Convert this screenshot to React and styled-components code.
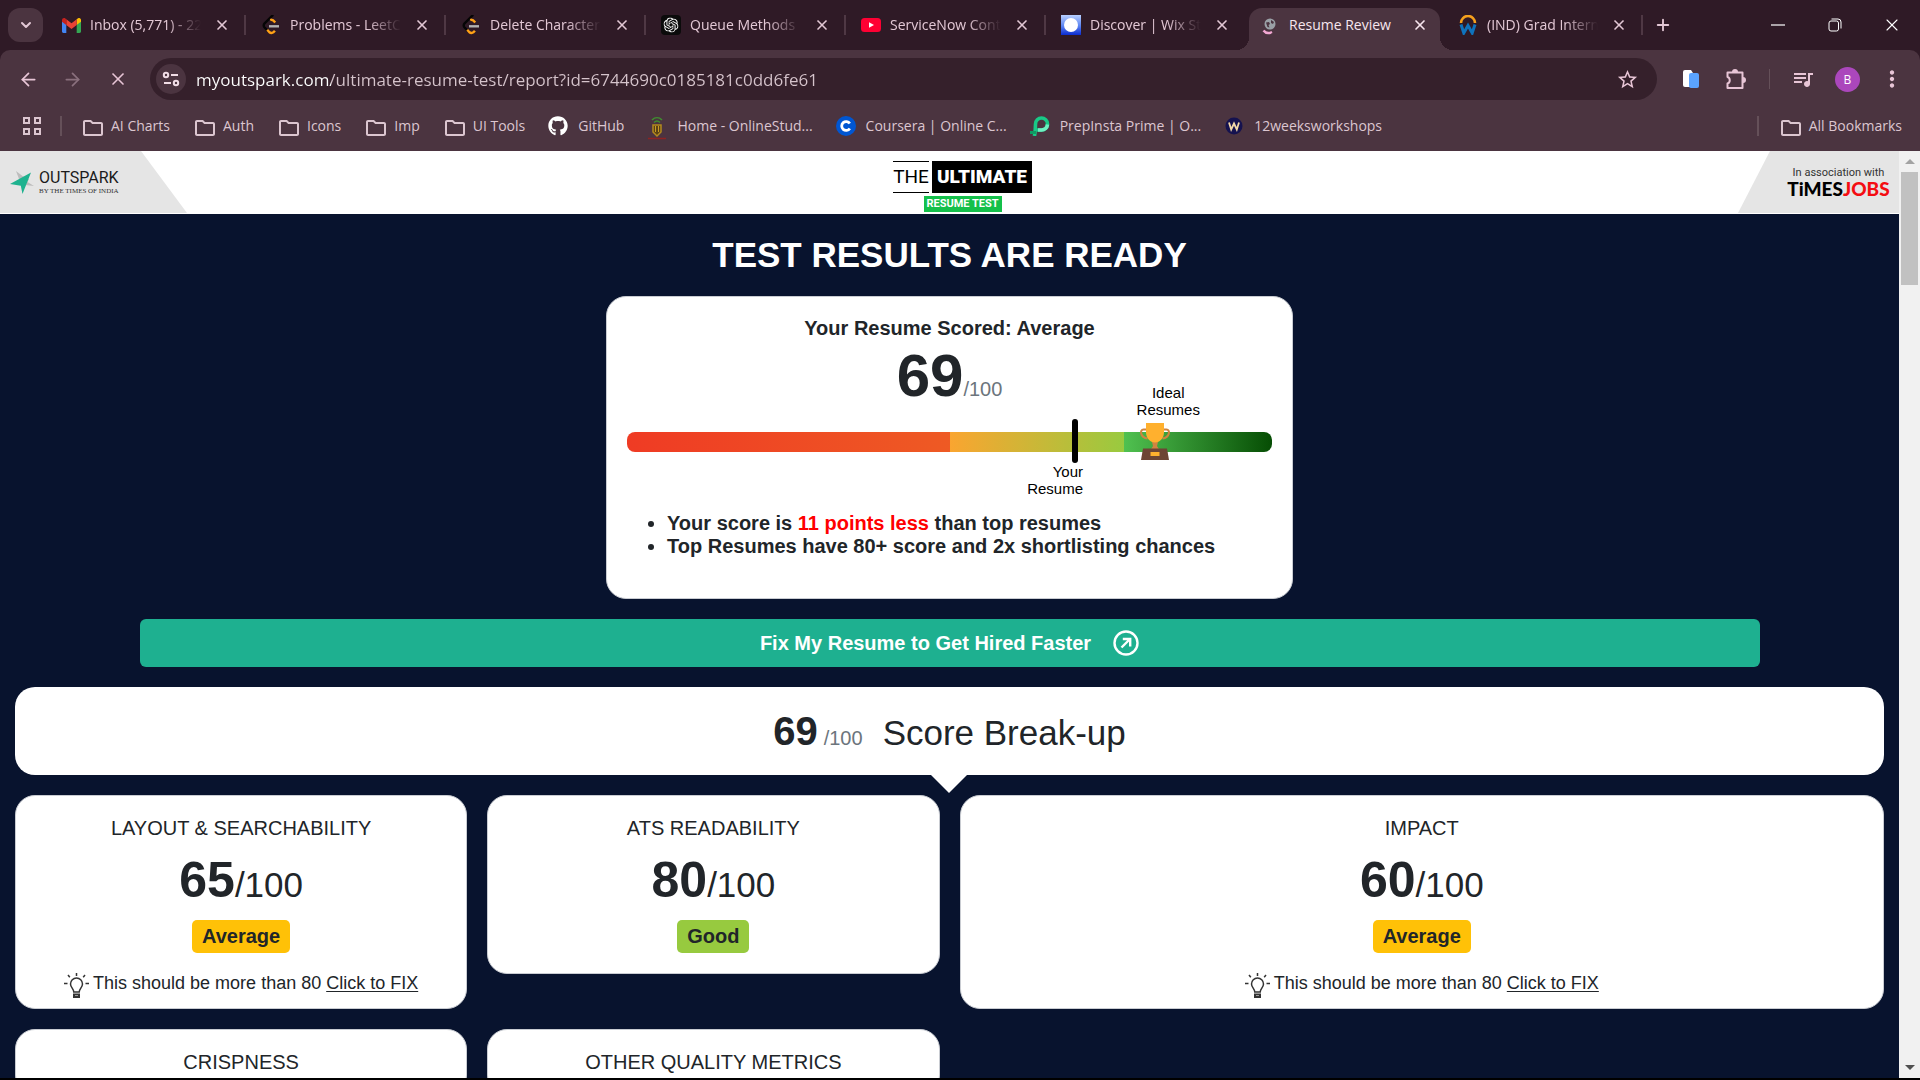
import React from "react";
import styled, { createGlobalStyle, css } from "styled-components";
import {
  MdStarBorder,
  MdOutlineFolder,
  MdQueueMusic,
  MdMoreVert,
} from "react-icons/md";
import { FaGithub } from "react-icons/fa";
import { SiOpenai } from "react-icons/si";
import { ArrowLeft, ArrowRight, X, Plus, ChevronDown } from "lucide-react";

const UI_FONT = `"Open Sans", "Noto Sans", sans-serif`;
const PAGE_FONT = `"Liberation Sans", Arial, sans-serif`;

const color = {
  strip: "#2f1a26",
  toolbar: "#4b3440",
  field: "#35202b",
  chromeText: "#e3c8d5",
  pink: "#e8c5d6",
  navy: "#08132e",
  ink: "#212529",
  muted: "#6c757d",
  teal: "#1eb090",
};

const GlobalStyle = createGlobalStyle`
  *, *::before, *::after { box-sizing: border-box; }
  body { margin: 0; background: #000; }
  button, input { font: inherit; }
  button { border: 0; padding: 0; background: none; color: inherit; }
`;

/* ---------- Browser frame ---------- */

const Window = styled.div`
  display: flex;
  flex-direction: column;
  height: 100vh;
  padding-bottom: 2px;
  overflow: hidden;
  font-family: ${UI_FONT};
  background: #000;
`;

const Chrome = styled.div`
  flex: none;
  background: ${color.strip};
`;

const TabStrip = styled.div`
  display: flex;
  align-items: center;
  height: 50px;
  padding-left: 8px;
  color: ${color.chromeText};
`;

const TabSearch = styled.button`
  display: grid;
  place-items: center;
  width: 35px;
  height: 34px;
  margin-right: 3px;
  border-radius: 12px;
  background: ${color.toolbar};
`;

const Tab = styled.div`
  position: relative;
  display: flex;
  align-items: center;
  flex: 0 1 200px;
  min-width: 0;
  height: 42px;
  margin-top: 8px;
  padding: 0 14px 8px 15px;
  font-size: 14px;
  line-height: 20px;

  ${(p) =>
    p.$divided &&
    css`
      background: linear-gradient(#4f3844, #4f3844) right 7px / 2px 20px no-repeat;
    `}

  ${(p) =>
    p.$active &&
    css`
      color: #f7e6ee;
      background: ${color.toolbar};
      border-radius: 13px 13px 0 0;
      flex-basis: 191px;
      margin-left: 3px;
      margin-right: 3px;
      padding: 0 10px 8px 11px;

      &::before,
      &::after {
        content: "";
        position: absolute;
        bottom: 0;
        width: 13px;
        height: 13px;
      }
      &::before {
        left: -13px;
        background: radial-gradient(circle at 0 0, transparent 13px, ${color.toolbar} 13px);
      }
      &::after {
        right: -13px;
        background: radial-gradient(circle at 100% 0, transparent 13px, ${color.toolbar} 13px);
      }
    `}
`;

const Favicon = styled.span`
  display: grid;
  place-items: center;
  flex: none;
  width: 20px;
  height: 20px;
`;

const TabTitle = styled.span`
  flex: 1;
  min-width: 0;
  margin: 0 11px 0 9px;
  overflow: hidden;
  white-space: nowrap;
  mask-image: ${(p) =>
    p.$fade ? "linear-gradient(90deg, #000 calc(100% - 34px), transparent)" : "none"};
`;

const IconButton = styled.button`
  display: grid;
  place-items: center;
  flex: none;
  width: ${(p) => p.$w || 20}px;
  height: ${(p) => p.$h || 20}px;
  color: ${(p) => p.$color || "inherit"};
`;

const WindowControls = styled.div`
  display: flex;
  margin-left: auto;
  color: #fff;
`;

const Toolbar = styled.div`
  display: flex;
  align-items: center;
  height: 58px;
  padding: 0 6px;
  border-radius: 10px 10px 0 0;
  background: ${color.toolbar};
  color: ${color.pink};
`;

const AddressBar = styled.form`
  display: flex;
  align-items: center;
  flex: 1;
  height: 42px;
  margin: 0 11px 0 10px;
  padding: 0 14px 0 6px;
  border-radius: 21px;
  background: ${color.field};
`;

const SiteInfo = styled.button`
  display: grid;
  place-items: center;
  width: 30px;
  height: 30px;
  border-radius: 50%;
  background: ${color.toolbar};
`;

const UrlInput = styled.input`
  flex: 1;
  min-width: 0;
  height: 30px;
  margin-left: 10px;
  padding: 0;
  border: 0;
  outline: 0;
  font-size: 17px;
  color: #d6c4cc;
  background: linear-gradient(90deg, #fff 135px, #d6c4cc 135px);
  background-clip: text;
  -webkit-text-fill-color: transparent;
`;

const VerticalRule = styled.span`
  width: ${(p) => p.$w || 2}px;
  height: 20px;
  flex: none;
  background: #655059;
`;

const Avatar = styled.span`
  display: grid;
  place-items: center;
  width: 25px;
  height: 25px;
  border-radius: 50%;
  background: #ab47bc;
  color: #fff;
  font-size: 12px;
`;

const BookmarksBar = styled.nav`
  display: flex;
  align-items: center;
  height: 43px;
  padding: 0 18px 8px 22px;
  background: ${color.toolbar};
  color: ${color.chromeText};
`;

const BookmarkList = styled.div`
  display: flex;
  flex: 1;
  min-width: 0;
  gap: 23px;
  margin-left: 19px;
`;

const Bookmark = styled.a`
  display: flex;
  align-items: center;
  gap: 10px;
  font-size: 14px;
  line-height: 20px;
  color: #dcc6d0;
  text-decoration: none;
  white-space: nowrap;
`;

const AppsButton = styled(IconButton)`
  margin-right: 18px;
`;

const Trailing = styled.div`
  display: flex;
  align-items: center;
  gap: 20px;
`;

/* ---------- Web page ---------- */

const Viewport = styled.div`
  display: flex;
  flex: 1;
  min-height: 0;
  overflow: hidden;
`;

const Page = styled.main`
  flex: 1;
  min-width: 0;
  overflow: hidden;
  background: ${color.navy};
  color: ${color.ink};
  font-family: ${PAGE_FONT};
  font-size: 20px;
  line-height: 24px;
`;

const Scrollbar = styled.div`
  display: flex;
  flex-direction: column;
  align-items: center;
  width: 21px;
  flex: none;
  background: #f1f1f1;
`;

const ScrollArrow = styled.span`
  display: grid;
  place-items: center;
  height: 21px;
`;

const ScrollThumb = styled.span`
  width: 17px;
  height: 113px;
  margin-bottom: auto;
  background: #c1c1c1;
`;

const SiteHeader = styled.header`
  display: flex;
  justify-content: space-between;
  height: 63px;
  background: #fff;
`;

const BrandPanel = styled.div`
  display: flex;
  align-items: center;
  height: 62px;
  background: #e5e5e5;
`;

const OutsparkPanel = styled(BrandPanel)`
  width: 187px;
  gap: 4px;
  padding-left: 10px;
  clip-path: polygon(0 0, 141px 0, 100% 100%, 0 100%);
`;

const OutsparkName = styled.div`
  display: flex;
  flex-direction: column;
  font: 400 16px/18px Roboto, sans-serif;
  color: #1b1b1b;

  small {
    font: 400 7px/8px "Liberation Serif", serif;
    color: #333;
    white-space: nowrap;
  }
`;

const TimesPanel = styled(BrandPanel)`
  flex-direction: column;
  justify-content: center;
  width: 161px;
  padding-left: 40px;
  clip-path: polygon(32px 0, 100% 0, 100% 100%, 0 100%);
  font: 400 11px/14px Roboto, sans-serif;
  color: #333;

  strong {
    font: 900 19px/18px Lato, sans-serif;
    color: #000;
  }
  em {
    font-style: normal;
    color: #f40d12;
  }
`;

const TestLogo = styled.div`
  display: flex;
  flex-direction: column;
  align-items: center;
  gap: 3px;
  padding-top: 10px;
`;

const TestLogoTop = styled.div`
  display: flex;
  gap: 3px;
  height: 32px;
  font: 400 19px/30px Roboto, sans-serif;
  color: #000;

  span {
    width: 36px;
    border: solid #000;
    border-width: 1px 0;
    text-align: center;
  }
  b {
    width: 100px;
    background: #000;
    color: #fff;
    font-weight: 900;
    line-height: 32px;
    text-align: center;
  }
`;

const TestLogoTag = styled.div`
  width: 78px;
  background: #14c04a;
  color: #fff;
  font: 700 11px/16px Roboto, sans-serif;
  text-align: center;
  white-space: nowrap;
`;

const Title = styled.h1`
  margin: 20px 0;
  font-size: 35px;
  line-height: 42px;
  font-weight: 700;
  text-align: center;
  color: #fff;
`;

const Card = styled.section`
  padding: 20px;
  border: 1px solid #c9ccd2;
  border-radius: 20px;
  background: #fff;
`;

const ScoreCard = styled(Card)`
  width: 687px;
  max-width: 100%;
  margin: 0 auto;
  padding: 19px 20px 40px;
`;

const ScoreHeading = styled.h2`
  margin: 0;
  font-size: 20px;
  line-height: 24px;
  text-align: center;
`;

const Score = styled.p`
  display: flex;
  justify-content: center;
  align-items: baseline;
  gap: ${(p) => p.$gap || 0}px;
  margin: 0;
  font-size: ${(p) => p.$outOf}px;
  line-height: 24px;
  color: ${(p) => (p.$muted ? color.muted : color.ink)};

  b {
    font-size: ${(p) => p.$size}px;
    line-height: ${(p) => p.$line}px;
    color: ${color.ink};
  }
`;

const Meter = styled.div`
  position: relative;
  display: flex;
  height: 20px;
  margin: 20px 0 60px;
`;

const Segment = styled.span`
  width: ${(p) => p.$width}%;
  background: linear-gradient(90deg, ${(p) => p.$from}, ${(p) => p.$to});

  &:first-child {
    border-radius: 8px 0 0 8px;
  }
  &:nth-child(3) {
    border-radius: 0 8px 8px 0;
  }
`;

const Marker = styled.span`
  position: absolute;
  left: 69%;
  top: -13px;
  width: 6px;
  height: 44px;
  border-radius: 3px;
  background: #000;
`;

const MeterLabel = styled.span`
  position: absolute;
  font-size: 15px;
  line-height: 17px;
  color: #000;
`;

const IdealLabel = styled(MeterLabel)`
  left: 79%;
  bottom: 34px;
  text-align: center;
`;

const YourLabel = styled(MeterLabel)`
  right: 189px;
  top: 31px;
  text-align: right;
`;

const TrophyPin = styled.span`
  position: absolute;
  left: 79%;
  top: -10px;
  width: 38px;
  height: 38px;
`;

const Facts = styled.ul`
  margin: 0;
  padding-left: 40px;
  font-weight: 700;
  line-height: 23px;

  em {
    font-style: normal;
    color: #f00;
  }
`;

const FixButton = styled.button`
  display: flex;
  align-items: center;
  justify-content: center;
  gap: 22px;
  width: calc(100% - 279px);
  height: 48px;
  margin: 20px auto;
  border-radius: 6px;
  background: ${color.teal};
  color: #fff;
  font-size: 20px;
  font-weight: 700;
`;

const BreakUp = styled(Card)`
  position: relative;
  display: flex;
  justify-content: center;
  align-items: baseline;
  gap: 20px;
  margin: 0 15px 10px;
  border: 0;

  &::after {
    content: "";
    position: absolute;
    left: calc(50% - 19px);
    top: 100%;
    border: solid transparent;
    border-width: 18px 18px 0;
    border-top-color: #fff;
  }

  h2 {
    margin: 0;
    font-size: 35px;
    line-height: 42px;
    font-weight: 400;
  }
`;

const MetricGrid = styled.div`
  display: grid;
  grid-template-columns: 1fr 1fr 2fr;
  align-items: start;
  padding: 0 5px;
`;

const MetricCell = styled.div`
  min-width: 0;
  padding: 10px;
`;

const MetricCard = styled(Card)`
  display: flex;
  flex-direction: column;
  align-items: center;
  gap: 10px;
  padding-bottom: ${(p) => (p.$hint ? 10 : 20)}px;

  h3 {
    margin: 0;
    font-size: 20px;
    line-height: 24px;
    font-weight: 400;
  }
`;

const Badge = styled.span`
  padding: 0 10px;
  border-radius: 5px;
  font-weight: 700;
  line-height: 33px;
  background: ${(p) => (p.$good ? "#97ca3f" : "#ffc107")};
`;

const Hint = styled.p`
  display: flex;
  align-items: flex-end;
  gap: 4px;
  margin: 6px 0 0;
  font-size: 18px;
  line-height: 29px;

  a {
    color: inherit;
    text-underline-offset: 2px;
  }
`;

/* ---------- Drawings ---------- */

const Gmail = () => (
  <svg width="19" height="15" viewBox="0 0 19 15">
    <path d="M0 2.5V13.6c0 .8.6 1.4 1.4 1.4h2.9V6.8z" fill="#4285f4" />
    <path d="M19 2.5V13.6c0 .8-.6 1.4-1.4 1.4h-2.9V6.8z" fill="#34a853" />
    <path d="M14.7 1.4v5.6L19 3.7V2.1C19 .3 17-.7 15.600.5z" fill="#fbbc04" />
    <path d="M4.300 7V1.300L9.500 5.200l5.200-3.900V7L9.500 10.900z" fill="#ea4335" />
    <path d="M0 2.100v1.600L4.300 7V1.400L3.400.6C2-.5 0 .4 0 2.100z" fill="#c5221f" />
  </svg>
);

const Leetcode = () => (
  <svg width="18" height="20" viewBox="0 0 18 20" fill="none" strokeWidth="2.4">
    <path d="M10.500.5 2.600 8.300c-1.200 1.200-1.200 3 0 4.200l2.600 2.600" stroke="#050505" strokeLinecap="round" />
    <path d="M8.200 5c1.800-.7 3.300.2 5 2.400" stroke="#ffa116" />
    <path d="M5.200 14.800 7.200 17c1.800 1.600 3.700 1.300 5.700-1.200" stroke="#ffa116" />
    <path d="M7 11.300h10" stroke="#b3b3b3" />
  </svg>
);

const ChatGpt = () => (
  <svg width="20" height="20" viewBox="0 0 20 20">
    <rect width="20" height="20" rx="4" fill="#0b0b0b" />
    <g transform="translate(2.500 2.500)" color="#fff">
      <SiOpenai size={15} />
    </g>
  </svg>
);

const Youtube = () => (
  <svg width="20" height="14" viewBox="0 0 20 14">
    <rect width="20" height="14" rx="3.500" fill="#ff0033" />
    <path d="M8 4.200v5.600L13 7z" fill="#fff" />
  </svg>
);

const Wix = () => (
  <svg width="20" height="20" viewBox="0 0 20 20">
    <defs>
      <linearGradient id="wixSky" x2="0" y2="1">
        <stop offset="0" stopColor="#b9d0ff" />
        <stop offset="0.550" stopColor="#5b84f2" />
        <stop offset="1" stopColor="#0a2bd0" />
      </linearGradient>
    </defs>
    <rect width="20" height="20" fill="url(#wixSky)" />
    <circle cx="10" cy="10" r="7" fill="#fff" />
  </svg>
);

const LoadingGlobe = () => (
  <svg width="20" height="20" viewBox="0 0 20 20">
    <circle cx="10" cy="9" r="5.500" fill="#9aa0a6" />
    <path d="M6 7.500 9 7l1 2-1.500 1 1 2.500-2-.5zM11 5l3 2-1 2-2-1z" fill="#4b3440" />
    <path d="M3.500 15.500c2 2.600 5.500 3 8.500 1.500" fill="none" stroke="#f3a8d3" strokeWidth="2.500" />
  </svg>
);

const Workday = () => (
  <svg width="18" height="20" viewBox="0 0 18 20" fill="none">
    <path d="M2 8a7 7 0 0 1 14 0" stroke="#f5a01d" strokeWidth="2.600" />
    <path d="m2 9.500 2.800 8.500L9 10.500l4.200 7.500L16 9.500" stroke="#0f73bd" strokeWidth="3" />
  </svg>
);

const OnlineStudies = () => (
  <svg width="20" height="24" viewBox="0 0 20 24" fill="none">
    <path d="M5 4c3-3 7-3 10 0M7 6.500c2-2 4-2 6 0" stroke="#3f8f2f" strokeWidth="1.500" />
    <path d="M6 9h8v7l-4 4-4-4z" fill="#5b4315" stroke="#b38a1e" strokeWidth="1.500" />
    <path d="M8.500 10v6m3-6v6" stroke="#c99b24" />
    <path d="M1 22.500h18" stroke="#8d2323" strokeWidth="1.500" />
  </svg>
);

const Coursera = () => (
  <svg width="20" height="20" viewBox="0 0 20 20">
    <circle cx="10" cy="10" r="10" fill="#0056d2" />
    <path d="M13.800 7.600a4.400 4.400 0 1 0 0 4.800" fill="none" stroke="#fff" strokeWidth="2.800" />
  </svg>
);

const PrepInsta = () => (
  <svg width="20" height="20" viewBox="0 0 20 20" fill="none">
    <path d="M7 14h4.500a6 6 0 1 0-6-6c0 4-.4 8-1 12" stroke="#18c987" strokeWidth="3.600" />
    <path d="M0 16.500h6" stroke="#0f9b63" strokeWidth="3" />
    <path d="M17.500 8.500a6 6 0 0 1-6 5.500H8" stroke="#6ff0c2" strokeWidth="3.600" />
  </svg>
);

const Workshops = () => (
  <svg width="18" height="18" viewBox="0 0 18 18">
    <circle cx="9" cy="9" r="8.500" fill="#15124f" />
    <path d="m4 5.500 2.200 7L9 6.500l2.800 6 2.200-7" fill="none" stroke="#f2d8a8" strokeWidth="1.800" />
  </svg>
);

const AppsGrid = () => (
  <svg width="20" height="20" viewBox="0 0 20 20" fill="none" stroke="#dcc6d0" strokeWidth="2">
    <path d="M2 2h5v5H2zM13 2h5v5h-5zM2 13h5v5H2zM13 13h5v5h-5z" />
  </svg>
);

const TuneIcon = () => (
  <svg width="18" height="16" viewBox="0 0 18 16" fill="none" stroke="#f0dce5" strokeWidth="2">
    <circle cx="4" cy="4" r="2.200" />
    <path d="M9 4h7M2 12h7" />
    <circle cx="14" cy="12" r="2.200" />
  </svg>
);

const CopyPages = () => (
  <svg width="18" height="20" viewBox="0 0 18 20">
    <path d="M3 1h6l2 3v14H3a2 2 0 0 1-2-2V3a2 2 0 0 1 2-2z" fill="#fff" />
    <rect x="7" y="4" width="10" height="15" rx="2" fill="#5ba3ff" />
  </svg>
);

const PuzzleIcon = () => (
  <svg width="22" height="22" viewBox="0 0 22 22">
    <path
      d="M2.500 4.500h15v15.500h-15v-4.500c3-.8 3-5.700 0-6.500z"
      fill="none"
      stroke="currentColor"
      strokeWidth="2"
      strokeLinejoin="round"
    />
    <path d="M7 4a3 3 0 0 1 6 0zM18 9a3 3 0 0 1 0 6z" fill="currentColor" />
  </svg>
);

const RestoreIcon = () => (
  <svg width="14" height="14" viewBox="0 0 14 14" fill="none" stroke="#fff">
    <rect x="1" y="3" width="9.500" height="10" rx="2" />
    <path d="M3.500 1h6.500a3 3 0 0 1 3 3v6.500" />
  </svg>
);

const MinimizeIcon = () => (
  <svg width="14" height="2" viewBox="0 0 14 2">
    <path d="M0 1h14" stroke="#fff" strokeWidth="1.200" />
  </svg>
);

const OutsparkMark = () => (
  <svg width="25" height="25" viewBox="0 0 25 25">
    <path d="M6 1l6.500 5L19 9l-1.500 3 6.500 4-9-1-6-6z" fill="#bdbdbd" />
    <path d="M21 2.500 12.500 24 10.800 15.700 0 14z" fill="#1eb28f" />
  </svg>
);

const Trophy = () => (
  <svg width="38" height="38" viewBox="0 0 38 38">
    <path d="M9 7.500H6.500c-4 0-3.500 8 4 9M27 7.500h2.500c4 0 3.500 8-4 9" fill="none" stroke="#d08440" strokeWidth="2" />
    <path d="M15 20h6l-1 4 2.500 4h-9L16 24z" fill="#d08440" />
    <path d="M9 1h18v9c0 6-4 10.500-9 10.500S9 16 9 10z" fill="#ffb02e" />
    <path d="M6 26.500h24L32 38H4z" fill="#6d4534" />
    <rect x="13.500" y="30" width="9" height="4" fill="#ffb02e" />
  </svg>
);

const Bulb = () => (
  <svg width="25" height="25" viewBox="0 0 25 25" fill="none" stroke="#333" strokeWidth="1.500">
    <path d="M9.800 19c0-3-3.300-4.800-3.300-8a6 6 0 0 1 12 0c0 3.200-3.300 5-3.300 8z" />
    <path d="M10 21.500h5v2.500h-5z" strokeWidth="2" />
    <path d="M12.500 0v3M4 2l1.800 2.300M21 2l-1.800 2.300M0 10.500h3.500M21.500 10.500H25" />
  </svg>
);

const CircleArrow = () => (
  <svg width="26" height="26" viewBox="0 0 26 26" fill="none" stroke="#fff" strokeWidth="2.400">
    <circle cx="13" cy="13" r="11.500" />
    <path d="m8.500 17.500 8-8M9.800 9h7.400v7.400" />
  </svg>
);

const Triangle = ({ down }) => (
  <svg width="10" height="5" viewBox="0 0 10 5">
    <path d={down ? "M0 0h10L5 5z" : "M0 5h10L5 0z"} fill={down ? "#505050" : "#a3a3a3"} />
  </svg>
);

/* ---------- Data ---------- */

const tabs = [
  { title: "Inbox (5,771) - 22", icon: <Gmail />, divided: true },
  { title: "Problems - LeetC", icon: <Leetcode />, divided: true },
  { title: "Delete Character", icon: <Leetcode />, divided: true },
  { title: "Queue Methods", icon: <ChatGpt />, divided: true },
  { title: "ServiceNow Cont", icon: <Youtube />, divided: true },
  { title: "Discover | Wix St", icon: <Wix /> },
  { title: "Resume Review", icon: <LoadingGlobe />, active: true },
  { title: "(IND) Grad Intern", icon: <Workday />, divided: true },
];

const folder = <MdOutlineFolder size={24} />;

const bookmarks = [
  { label: "AI Charts", icon: folder },
  { label: "Auth", icon: folder },
  { label: "Icons", icon: folder },
  { label: "Imp", icon: folder },
  { label: "UI Tools", icon: folder },
  { label: "GitHub", icon: <FaGithub size={20} color="#fff" /> },
  { label: "Home - OnlineStud...", icon: <OnlineStudies /> },
  { label: "Coursera | Online C...", icon: <Coursera /> },
  { label: "PrepInsta Prime | O...", icon: <PrepInsta /> },
  { label: "12weeksworkshops", icon: <Workshops /> },
];

const metrics = [
  { name: "LAYOUT & SEARCHABILITY", score: 65, grade: "Average", hint: true },
  { name: "ATS READABILITY", score: 80, grade: "Good" },
  { name: "IMPACT", score: 60, grade: "Average", hint: true },
  { name: "CRISPNESS" },
  { name: "OTHER QUALITY METRICS" },
];

/* ---------- Composition ---------- */

function BrowserChrome() {
  return (
    <Chrome>
      <TabStrip>
        <TabSearch aria-label="Search tabs">
          <ChevronDown size={16} strokeWidth={3} />
        </TabSearch>
        {tabs.map((t) => (
          <Tab key={t.title} $active={t.active} $divided={t.divided}>
            <Favicon>{t.icon}</Favicon>
            <TabTitle $fade={!t.active}>{t.title}</TabTitle>
            <IconButton aria-label="Close tab">
              <X size={16} strokeWidth={2.5} />
            </IconButton>
          </Tab>
        ))}
        <IconButton $w={40} $h={34} aria-label="New tab">
          <Plus size={18} strokeWidth={2.5} />
        </IconButton>
        <WindowControls>
          <IconButton $w={57} $h={50} aria-label="Minimize">
            <MinimizeIcon />
          </IconButton>
          <IconButton $w={57} $h={50} aria-label="Restore">
            <RestoreIcon />
          </IconButton>
          <IconButton $w={57} $h={50} aria-label="Close">
            <X size={20} strokeWidth={1.3} />
          </IconButton>
        </WindowControls>
      </TabStrip>
      <Toolbar>
        <IconButton $w={44} $h={40} aria-label="Back">
          <ArrowLeft size={21} />
        </IconButton>
        <IconButton $w={45} $h={40} $color="#8a707d" aria-label="Forward">
          <ArrowRight size={21} />
        </IconButton>
        <IconButton $w={45} $h={40} aria-label="Stop">
          <X size={20} />
        </IconButton>
        <AddressBar onSubmit={(e) => e.preventDefault()}>
          <SiteInfo type="button" aria-label="Site information">
            <TuneIcon />
          </SiteInfo>
          <UrlInput
            aria-label="Address"
            defaultValue="myoutspark.com/ultimate-resume-test/report?id=6744690c0185181c0dd6fe61"
          />
          <IconButton type="button" $w={32} $h={32} aria-label="Bookmark this page">
            <MdStarBorder size={23} />
          </IconButton>
        </AddressBar>
        <IconButton $w={45} $h={40} aria-label="Copy extension">
          <CopyPages />
        </IconButton>
        <IconButton $w={45} $h={40} aria-label="Extensions">
          <PuzzleIcon />
        </IconButton>
        <IconButton as="span" $w={22} $h={40}>
          <VerticalRule $w={1} />
        </IconButton>
        <IconButton $w={45} $h={40} aria-label="Media controls">
          <MdQueueMusic size={24} />
        </IconButton>
        <IconButton $w={45} $h={40} aria-label="Profile">
          <Avatar>B</Avatar>
        </IconButton>
        <IconButton $w={44} $h={40} aria-label="Menu">
          <MdMoreVert size={26} />
        </IconButton>
      </Toolbar>
      <BookmarksBar>
        <AppsButton aria-label="Apps">
          <AppsGrid />
        </AppsButton>
        <VerticalRule />
        <BookmarkList>
          {bookmarks.map((b) => (
            <Bookmark key={b.label} href="#">
              <Favicon>{b.icon}</Favicon>
              {b.label}
            </Bookmark>
          ))}
        </BookmarkList>
        <Trailing>
          <VerticalRule />
          <Bookmark href="#">
            <Favicon>{folder}</Favicon>
            All Bookmarks
          </Bookmark>
        </Trailing>
      </BookmarksBar>
    </Chrome>
  );
}

function ResumeScore() {
  return (
    <ScoreCard>
      <ScoreHeading>Your Resume Scored: Average</ScoreHeading>
      <Score $size={60} $outOf={20} $line={72} $muted>
        <b>69</b>/100
      </Score>
      <Meter>
        <Segment $width={50} $from="#ef3b24" $to="#ee5a24" />
        <Segment $width={27} $from="#faa530" $to="#99ca3f" />
        <Segment $width={23} $from="#50c150" $to="#064d04" />
        <Marker />
        <IdealLabel>
          Ideal
          <br />
          Resumes
        </IdealLabel>
        <YourLabel>
          Your
          <br />
          Resume
        </YourLabel>
        <TrophyPin>
          <Trophy />
        </TrophyPin>
      </Meter>
      <Facts>
        <li>
          Your score is <em>11 points less</em> than top resumes
        </li>
        <li>Top Resumes have 80+ score and 2x shortlisting chances</li>
      </Facts>
    </ScoreCard>
  );
}

function Metric({ name, score, grade, hint }) {
  return (
    <MetricCell>
      <MetricCard $hint={hint}>
        <h3>{name}</h3>
        {score && (
          <Score $size={50} $outOf={35} $line={60}>
            <b>{score}</b>/100
          </Score>
        )}
        {grade && <Badge $good={grade === "Good"}>{grade}</Badge>}
        {hint && (
          <Hint>
            <Bulb />
            <span>
              This should be more than 80 <a href="#">Click to FIX</a>
            </span>
          </Hint>
        )}
      </MetricCard>
    </MetricCell>
  );
}

export default function App() {
  return (
    <Window>
      <GlobalStyle />
      <BrowserChrome />
      <Viewport>
        <Page>
          <SiteHeader>
            <OutsparkPanel>
              <OutsparkMark />
              <OutsparkName>
                OUTSPARK
                <small>BY THE TIMES OF INDIA</small>
              </OutsparkName>
            </OutsparkPanel>
            <TestLogo>
              <TestLogoTop>
                <span>THE</span>
                <b>ULTIMATE</b>
              </TestLogoTop>
              <TestLogoTag>RESUME TEST</TestLogoTag>
            </TestLogo>
            <TimesPanel>
              In association with
              <strong>
                TiMES<em>JOBS</em>
              </strong>
            </TimesPanel>
          </SiteHeader>
          <Title>TEST RESULTS ARE READY</Title>
          <ResumeScore />
          <FixButton>
            Fix My Resume to Get Hired Faster
            <CircleArrow />
          </FixButton>
          <BreakUp>
            <Score $size={40} $outOf={20} $line={48} $gap={6} $muted>
              <b>69</b>/100
            </Score>
            <h2>Score Break-up</h2>
          </BreakUp>
          <MetricGrid>
            {metrics.map((m) => (
              <Metric key={m.name} {...m} />
            ))}
          </MetricGrid>
        </Page>
        <Scrollbar>
          <ScrollArrow>
            <Triangle />
          </ScrollArrow>
          <ScrollThumb />
          <ScrollArrow>
            <Triangle down />
          </ScrollArrow>
        </Scrollbar>
      </Viewport>
    </Window>
  );
}
